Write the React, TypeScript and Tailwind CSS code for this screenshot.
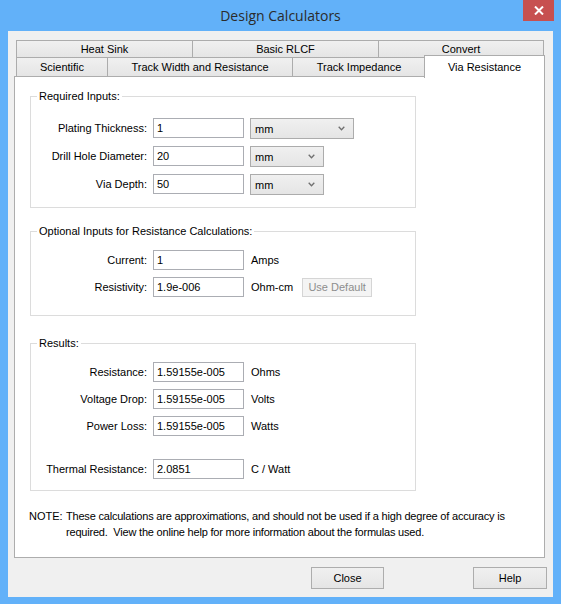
import React from 'react';

const font = "font-['Liberation_Sans',Arial,sans-serif]";

function Tab({ label, className }: { label: string; className: string }) {
  return (
    <div
      className={`flex items-center justify-center border border-[#acacac] bg-gradient-to-b from-[#f0f0f0] to-[#e5e5e5] text-[11px] text-black ${className}`}
    >
      {label}
    </div>
  );
}

function TextBox({ value }: { value: string }) {
  return (
    <div className="flex h-[20px] w-[91px] items-center border border-[#abadb3] bg-white pl-[3px] text-[11px] text-black">
      {value}
    </div>
  );
}

function Select({ value, className }: { value: string; className: string }) {
  return (
    <div
      className={`ml-[6px] flex h-[21px] items-center justify-between border border-[#acacac] bg-gradient-to-b from-[#f0f0f0] to-[#e5e5e5] pl-[4px] pr-[8px] pt-[2px] text-[11px] text-black ${className}`}
    >
      <span>{value}</span>
      <svg width="7" height="5" viewBox="0 0 7 5" className="-mt-[2px]">
        <path d="M0.7 0.8 L3.5 3.8 L6.3 0.8" fill="none" stroke="#707070" strokeWidth="1.3" />
      </svg>
    </div>
  );
}

function Row({
  label,
  value,
  className = '',
  children,
}: {
  label: string;
  value: string;
  className?: string;
  children?: React.ReactNode;
}) {
  return (
    <div className={`flex h-[20px] items-center ${className}`}>
      <div className="mr-[6px] w-[116px] whitespace-nowrap text-right text-[11px] text-black">{label}</div>
      <TextBox value={value} />
      {children}
    </div>
  );
}

function Unit({ text }: { text: string }) {
  return <span className="ml-[7px] text-[11px] text-black">{text}</span>;
}

function GroupBox({
  title,
  className,
  children,
}: {
  title: string;
  className: string;
  children: React.ReactNode;
}) {
  return (
    <div className={`relative ml-[15px] w-[386px] border border-[#dcdcdc] ${className}`}>
      <span className="absolute -top-[8px] left-[6px] bg-white px-[2px] text-[11px] leading-[14px] text-black">
        {title}
      </span>
      {children}
    </div>
  );
}

function Button({ label, className }: { label: string; className: string }) {
  return (
    <div
      className={`flex h-[22px] items-center justify-center border border-[#adadad] bg-gradient-to-b from-[#f0f0f0] to-[#e5e5e5] text-[11px] text-black ${className}`}
    >
      {label}
    </div>
  );
}

export default function App() {
  return (
    <div className={`flex h-[604px] w-[561px] flex-col bg-[#62b1f9] ${font}`}>
      {/* Title bar */}
      <div className="relative flex h-[31px] shrink-0 items-center justify-center">
        <span className="font-['Open_Sans',sans-serif] text-[14px] text-[#2b2b2b]">Design Calculators</span>
        <div className="absolute right-[7px] top-0 flex h-[21px] w-[31px] items-center justify-center bg-[#c75050]">
          <svg width="10" height="9" viewBox="0 0 10 9">
            <path d="M1 0.5 L9 8.5 M9 0.5 L1 8.5" stroke="#ffffff" strokeWidth="2" />
          </svg>
        </div>
      </div>

      {/* Client area */}
      <div className="mx-[8px] mb-[7px] flex flex-1 flex-col bg-[#f0f0f0] pl-[6px] pt-[9px]">
        {/* Tabs */}
        <div className="ml-[2px] flex h-[18px]">
          <Tab label="Heat Sink" className="w-[177px]" />
          <Tab label="Basic RLCF" className="-ml-px w-[187px]" />
          <Tab label="Convert" className="-ml-px w-[166px]" />
        </div>
        <div className="-mt-px ml-[2px] flex h-[20px]">
          <Tab label="Scientific" className="w-[92px]" />
          <Tab label="Track Width and Resistance" className="-ml-px w-[186px]" />
          <Tab label="Track Impedance" className="-ml-px w-[134px]" />
          <div className="relative z-10 -ml-[2px] -mt-[2px] flex h-[23px] w-[121px] justify-center border border-b-0 border-[#acacac] bg-white pt-[3px] text-[11px] text-black">
            Via Resistance
          </div>
        </div>

        {/* Panel */}
        <div className="relative -mt-px flex h-[482px] w-[531px] flex-col border border-[#adadad] bg-white">
          <GroupBox title="Required Inputs:" className="mt-[19px] h-[112px] pt-[21px]">
            <Row label="Plating Thickness:" value="1">
              <Select value="mm" className="w-[104px]" />
            </Row>
            <Row label="Drill Hole Diameter:" value="20" className="mt-[8px]">
              <Select value="mm" className="w-[74px]" />
            </Row>
            <Row label="Via Depth:" value="50" className="mt-[8px]">
              <Select value="mm" className="w-[74px]" />
            </Row>
          </GroupBox>

          <GroupBox title="Optional Inputs for Resistance Calculations:" className="mt-[23px] h-[85px] pt-[18px]">
            <Row label="Current:" value="1">
              <Unit text="Amps" />
            </Row>
            <Row label="Resistivity:" value="1.9e-006" className="mt-[7px]">
              <Unit text="Ohm-cm" />
              <div className="ml-[9px] flex h-[19px] w-[70px] items-center justify-center border border-[#d5d5d5] bg-[#f4f4f4] text-[11px] text-[#8d8d8d]">
                Use Default
              </div>
            </Row>
          </GroupBox>

          <GroupBox title="Results:" className="mt-[27px] h-[148px] pt-[18px]">
            <Row label="Resistance:" value="1.59155e-005">
              <Unit text="Ohms" />
            </Row>
            <Row label="Voltage Drop:" value="1.59155e-005" className="mt-[7px]">
              <Unit text="Volts" />
            </Row>
            <Row label="Power Loss:" value="1.59155e-005" className="mt-[7px]">
              <Unit text="Watts" />
            </Row>
            <Row label="Thermal Resistance:" value="2.0851" className="mt-[23px]">
              <Unit text="C / Watt" />
            </Row>
          </GroupBox>

          <div className="ml-[14px] mt-[17px] flex text-[11px] leading-[16px] text-black">
            <span className="w-[37px] shrink-0">NOTE:</span>
            <p className="whitespace-nowrap tracking-[-0.2px]">
              These calculations are approximations, and should not be used if a high degree of accuracy is
              <br />
              required.&nbsp; View the online help for more information about the formulas used.
            </p>
          </div>
        </div>

        {/* Buttons */}
        <div className="mt-[9px] flex justify-end gap-[89px] pr-[6px]">
          <Button label="Close" className="w-[73px]" />
          <Button label="Help" className="w-[74px]" />
        </div>
      </div>
    </div>
  );
}
